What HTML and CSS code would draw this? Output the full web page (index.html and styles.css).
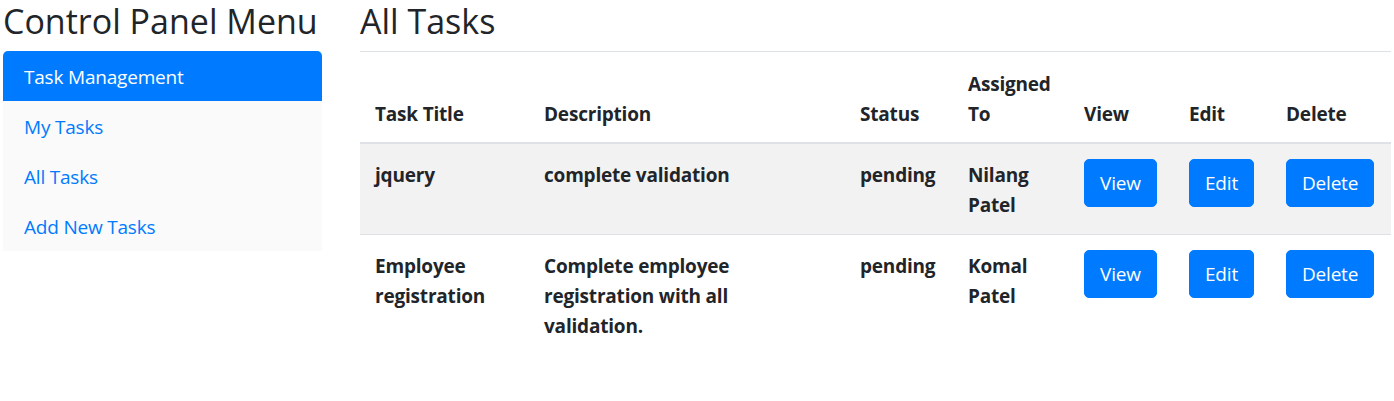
FILE: index.html
```html
<!DOCTYPE html>
<html lang="en">
<head>
<meta charset="utf-8">
<title>All Tasks</title>
<link rel="stylesheet" href="styles.css">
</head>
<body>
<div class="page">
  <aside class="sidebar">
    <h3 class="side-title">Control Panel Menu</h3>
    <ul class="menu">
      <li><a class="menu-item active" href="#">Task Management</a></li>
      <li><a class="menu-item" href="#">My Tasks</a></li>
      <li><a class="menu-item" href="#">All Tasks</a></li>
      <li><a class="menu-item" href="#">Add New Tasks</a></li>
    </ul>
  </aside>
  <main class="content">
    <h2 class="page-title">All Tasks</h2>
    <table class="tasks">
      <colgroup>
        <col class="c-title"><col class="c-desc"><col class="c-status"><col class="c-assigned"><col class="c-view"><col class="c-edit"><col class="c-delete">
      </colgroup>
      <thead>
        <tr>
          <th>Task Title</th>
          <th>Description</th>
          <th>Status</th>
          <th>Assigned To</th>
          <th>View</th>
          <th>Edit</th>
          <th>Delete</th>
        </tr>
      </thead>
      <tbody>
        <tr class="striped">
          <td>jquery</td>
          <td>complete validation</td>
          <td>pending</td>
          <td>Nilang Patel</td>
          <td class="action"><a class="btn" href="#">View</a></td>
          <td class="action"><a class="btn" href="#">Edit</a></td>
          <td class="action"><a class="btn" href="#">Delete</a></td>
        </tr>
        <tr>
          <td>Employee registration</td>
          <td>Complete employee registration with all validation.</td>
          <td>pending</td>
          <td>Komal Patel</td>
          <td class="action"><a class="btn" href="#">View</a></td>
          <td class="action"><a class="btn" href="#">Edit</a></td>
          <td class="action"><a class="btn" href="#">Delete</a></td>
        </tr>
      </tbody>
    </table>
  </main>
</div>
</body>
</html>
```

FILE: styles.css
```css
* { box-sizing: border-box; }

body {
  margin: 0;
  font-family: "Open Sans", "Noto Sans", sans-serif;
  font-size: 19px;
  letter-spacing: -0.2px;
  line-height: 30px;
  color: #212529;
  background: #fff;
}

.page {
  display: flex;
  gap: 38px;
  padding: 0 3px;
}

.sidebar {
  width: 319px;
  flex: none;
}

.side-title,
.page-title {
  margin: 0 0 9px;
  font-size: 34px;
  line-height: 42px;
  letter-spacing: 0;
  font-weight: 500;
  color: #212529;
}

.menu {
  list-style: none;
  margin: 0;
  padding: 0;
  background: #fafafa;
}

.menu-item {
  display: block;
  padding: 11px 21px 9px;
  color: #007bff;
  text-decoration: none;
  line-height: 30px;
}

.menu-item.active {
  background: #007bff;
  color: #fff;
  border-radius: 5px 5px 0 0;
}

.content {
  flex: 1;
}

.tasks {
  width: 1031px;
  border-collapse: collapse;
  table-layout: fixed;
}

.c-title { width: 169px; }
.c-desc { width: 316px; }
.c-status { width: 108px; }
.c-assigned { width: 116px; }
.c-view { width: 105px; }
.c-edit { width: 97px; }
.c-delete { width: 120px; }

.tasks th,
.tasks td {
  padding: 16px 15px 14px;
  text-align: left;
  vertical-align: top;
  font-weight: 700;
  border-top: 1px solid #dee2e6;
}

.tasks thead th {
  padding: 17px 15px 13px;
  vertical-align: bottom;
  border-bottom: 2px solid #dee2e6;
}

.tasks td.action {
  padding: 15px;
}

.tasks tr.striped td {
  background: #f2f2f2;
}

.btn {
  display: inline-block;
  padding: 8px 15px;
  border: 1px solid #007bff;
  border-radius: 5px;
  background: #007bff;
  color: #fff;
  font-weight: 400;
  line-height: 30px;
  text-decoration: none;
}
```
